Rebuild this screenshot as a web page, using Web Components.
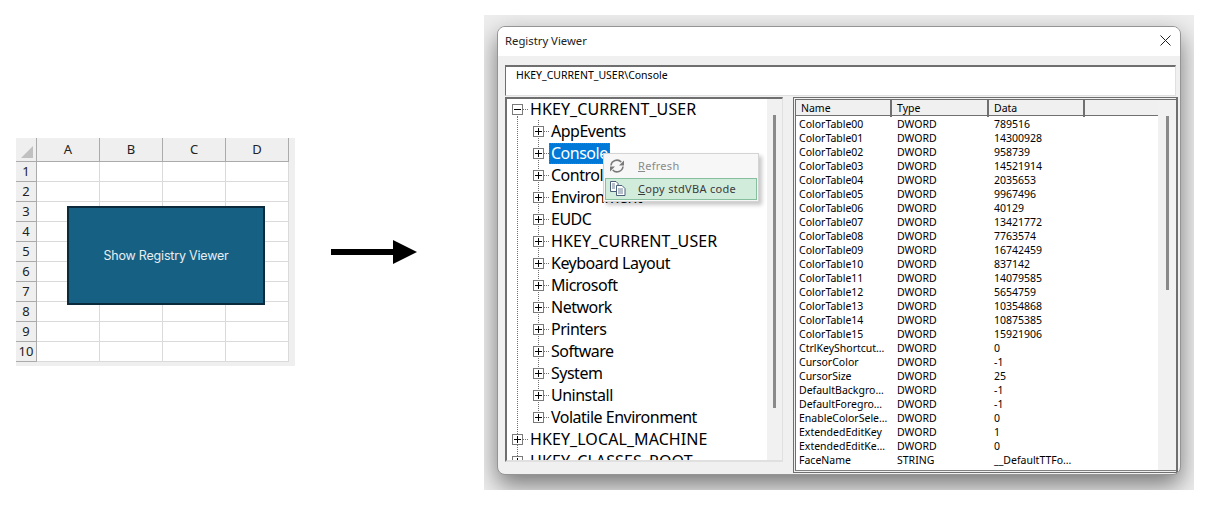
<!DOCTYPE html>
<html><head><meta charset="utf-8"><title>Registry Viewer</title>
<style>html,body{margin:0;padding:0;background:#fff;width:1211px;height:507px;overflow:hidden}</style></head>
<body>
<demo-page></demo-page>
<script>
function el(name,css,html){
  customElements.define(name,class extends HTMLElement{
    connectedCallback(){ if(this.shadowRoot) return;
      const s=this.attachShadow({mode:'open'});
      s.innerHTML='<style>'+css+'</style>'+(typeof html==='function'?html(this):html);
    }
  });
}
const UI='"Noto Sans","Open Sans",sans-serif';

el('sheet-grid',`
:host{display:grid;grid-template-columns:21px repeat(4,63px) 6px;grid-template-rows:24px repeat(10,20px) 4px;width:279px;height:228px;background:#efefef;font:13px ${UI};color:#222;position:relative}
.corner{position:relative;border-right:1px solid #ababab;border-bottom:1px solid #ababab;box-sizing:border-box}
.corner i{position:absolute;right:3px;bottom:3px;width:0;height:0;border-left:12px solid transparent;border-bottom:12px solid #c0c0c0}
.ch{display:flex;align-items:center;justify-content:center;border-right:1px solid #ababab;border-bottom:1px solid #ababab;box-sizing:border-box;padding-bottom:1px}
.rh{display:flex;align-items:center;justify-content:center;border-right:1px solid #ababab;border-bottom:1px solid #ababab;box-sizing:border-box;padding-bottom:2px}
.c{background:#fff;border-right:1px solid #dadada;border-bottom:1px solid #dadada;box-sizing:border-box}
.e{background:#efefef}
.btn{position:absolute;left:51px;top:68px;width:198px;height:99px;box-sizing:border-box;background:#166083;border:2px solid #0b2a3c;color:#e8eef2;display:flex;align-items:center;justify-content:center;font:12.5px "Inter",sans-serif;letter-spacing:-.2px}
`,()=>{
  let h='<div class="corner"><i></i></div>';
  for(const c of 'ABCD')h+=`<div class="ch">${c}</div>`;
  h+='<div class="e"></div>';
  for(let r=1;r<=10;r++){h+=`<div class="rh">${r}</div>`+'<div class="c"></div>'.repeat(4)+'<div class="e"></div>';}
  h+='<div class="e" style="grid-column:1/-1"></div>';
  return h+'<div class="btn">Show Registry Viewer</div>';
});

el('flow-arrow',`
:host{display:block;width:86px;height:24px}
svg{display:block}
`,`<svg width="86" height="24" viewBox="0 0 86 24"><path d="M0 9H62V0L86 12 62 24V15H0Z" fill="#000"/></svg>`);

el('tree-row',`
:host{display:flex;align-items:center;height:22px;position:relative;white-space:nowrap}
.box{width:11px;height:11px;box-sizing:border-box;border:1px solid #7a7a7a;background:#fff;position:relative;flex:none;z-index:1}
.box:before{content:"";position:absolute;left:1px;right:1px;top:4px;height:1px;background:#000}
:host([plus]) .box:after{content:"";position:absolute;top:1px;bottom:1px;left:4px;width:1px;background:#000}
.dots{width:5px;flex:none;border-top:1px dotted #707070;height:0}
.lab{font:16px ${UI};color:#000;padding:0 2px;height:21px;line-height:21px;box-sizing:border-box;letter-spacing:-.5px}
:host([caps]) .lab{letter-spacing:.08px}
:host([sel]) .lab{background:#0078d7;color:#fff;outline:1px dotted #c06000;outline-offset:-1px}
`,`<span class="box"></span><span class="dots"></span><span class="lab"><slot></slot></span>`);

el('reg-tree',`
:host{display:flex;position:relative;overflow:hidden;flex:1;background:#fff;min-width:0}
.body{flex:1;padding:0 0 0 5px;margin-top:-1px;position:relative;overflow:hidden}
.spine{position:absolute;left:10px;top:18px;bottom:0;border-left:1px dotted #707070}
.kids{margin-left:21px;position:relative}
.kids:before{content:"";position:absolute;left:5px;top:0;bottom:11px;border-left:1px dotted #707070}
.track{width:15px;background:#f1f1f1;flex:none;position:relative;display:flex;justify-content:center}
.thumb{width:3px;height:293px;background:#8a8a8a;margin-top:16px}
`,`<div class="body"><div class="spine"></div>
<tree-row caps>HKEY_CURRENT_USER</tree-row>
<div class="kids">
<tree-row plus>AppEvents</tree-row><tree-row plus sel>Console</tree-row><tree-row plus>Control Panel</tree-row><tree-row plus>Environment</tree-row><tree-row plus>EUDC</tree-row><tree-row plus caps>HKEY_CURRENT_USER</tree-row><tree-row plus>Keyboard Layout</tree-row><tree-row plus>Microsoft</tree-row><tree-row plus>Network</tree-row><tree-row plus>Printers</tree-row><tree-row plus>Software</tree-row><tree-row plus>System</tree-row><tree-row plus>Uninstall</tree-row><tree-row plus>Volatile Environment</tree-row>
</div>
<tree-row plus caps>HKEY_LOCAL_MACHINE</tree-row>
<tree-row plus caps>HKEY_CLASSES_ROOT</tree-row>
</div><div class="track"><div class="thumb"></div></div>`);

const rows=[['ColorTable00','DWORD','789516'],['ColorTable01','DWORD','14300928'],['ColorTable02','DWORD','958739'],['ColorTable03','DWORD','14521914'],['ColorTable04','DWORD','2035653'],['ColorTable05','DWORD','9967496'],['ColorTable06','DWORD','40129'],['ColorTable07','DWORD','13421772'],['ColorTable08','DWORD','7763574'],['ColorTable09','DWORD','16742459'],['ColorTable10','DWORD','837142'],['ColorTable11','DWORD','14079585'],['ColorTable12','DWORD','5654759'],['ColorTable13','DWORD','10354868'],['ColorTable14','DWORD','10875385'],['ColorTable15','DWORD','15921906'],['CtrlKeyShortcut…','DWORD','0'],['CursorColor','DWORD','-1'],['CursorSize','DWORD','25'],['DefaultBackgro…','DWORD','-1'],['DefaultForegro…','DWORD','-1'],['EnableColorSele…','DWORD','0'],['ExtendedEditKey','DWORD','1'],['ExtendedEditKe…','DWORD','0'],['FaceName','STRING','__DefaultTTFo…']];

el('reg-list',`
:host{display:flex;flex:1;overflow:hidden;background:#fff;font:10.5px ${UI};color:#000;min-width:0}
.main{flex:1;display:flex;flex-direction:column;min-width:0;overflow:hidden}
.head{display:grid;grid-template-columns:96px 97px 96px 1fr;height:16px;box-sizing:border-box;background:#f0f0f0;border-bottom:1px solid #707070;flex:none}
.head div{border-right:2px solid #707070;padding-left:5px;line-height:17px}
.head div:last-child{border-right:0}
.rows{padding-top:1px}
.r{display:grid;grid-template-columns:98px 97px 1fr;height:14px;line-height:14px;padding-left:3px;white-space:nowrap}
.track{width:18px;flex:none;background:#f1f1f1;display:flex;justify-content:center}
.thumb{width:3px;height:174px;margin-top:16px;background:#8a8a8a}
`,`<div class="main"><div class="head"><div>Name</div><div>Type</div><div>Data</div><div></div></div>
<div class="rows">${rows.map(r=>`<div class="r"><span>${r[0]}</span><span>${r[1]}</span><span>${r[2]}</span></div>`).join('')}</div></div>
<div class="track"><div class="thumb"></div></div>`);

el('ctx-menu',`
:host{display:block;position:absolute;left:603px;top:153px;width:156px;box-sizing:border-box;background:#f7f7f7;border:1px solid #d4d4d4;box-shadow:3px 3px 4px rgba(0,0,0,.22);padding:1px;font:11px ${UI};z-index:5}
.i{display:flex;align-items:center;height:23px;box-sizing:border-box;color:#8a8a8a;letter-spacing:.3px;padding-bottom:2px}
.i.on{height:22px;background:#d2ecdc;border:1px solid #86bf9e;color:#3a3a3a;padding-bottom:1px}
.ic{width:24px;margin-right:9px;display:flex;justify-content:center;flex:none}
.i.on .ic{width:23px}
u{text-underline-offset:1px}
svg{display:block}
`,`<div class="i"><span class="ic"><svg width="16" height="16" viewBox="0 0 16 16" fill="none" stroke="#7a7a7a" stroke-width="1.6"><path d="M2 7.5A6 6 0 0 1 12.3 4"/><path d="M14 8.5A6 6 0 0 1 3.7 12"/><path d="M15 2.5V7.5H10Z" fill="#7a7a7a" stroke="none"/><path d="M1 13.5V8.5H6Z" fill="#7a7a7a" stroke="none"/></svg></span><span><u>R</u>efresh</span></div>
<div class="i on"><span class="ic"><svg width="16" height="15" viewBox="0 0 16 15" fill="#fff" stroke="#4a5f7a"><path d="M.5.5H6l2 2v8H.5Z"/><path d="M6.5 4.5H12l3 3v7H6.5Z"/><path d="M2 3h3M2 5h3M2 7h3M8 8h5M8 10h5M8 12h5" stroke-width=".8"/></svg></span><span><u>C</u>opy stdVBA code</span></div>`);

el('reg-dialog',`
:host{display:flex;flex-direction:column;width:684px;height:449px;box-sizing:border-box;background:#f0f0f0;border-radius:8px;border:1px solid #949494;box-shadow:0 10px 24px rgba(0,0,0,.5);position:relative;overflow:hidden}
.title{height:29px;box-sizing:border-box;background:#fff;flex:none;display:flex;align-items:center;justify-content:space-between;padding:0 9px 2px 7px;font:11.3px ${UI};color:#222}
.x{display:block}
.content{flex:1;display:flex;flex-direction:column;padding:9px 2px 1px 7px;min-height:0;gap:1px}
.addr{height:31px;box-sizing:border-box;flex:none;margin-right:2px;background:#fff;border-top:2px solid #6f6f6f;border-left:1px solid #6f6f6f;border-right:1px solid #e0e0e0;border-bottom:1px solid #e0e0e0;padding:1px 0 0 10px;font:10.5px ${UI};line-height:15px;color:#000}
.panes{flex:1;display:flex;gap:10px;min-height:0;align-items:flex-start}
.pane{display:flex;box-sizing:border-box;min-width:0;overflow:hidden}
.l{width:278px;height:365px;border:2px solid;border-color:#6f6f6f #e0e0e0 #e0e0e0 #6f6f6f;border-right-width:1px}
.r{width:385px;height:376px;border:1px solid #6f6f6f;border-right-width:2px;padding:1px 0 1px 1px;background:#f0f0f0}
.in{flex:1;display:flex;min-width:0;overflow:hidden;border-left:1px solid #6f6f6f;border-top:1px solid #6f6f6f;border-bottom:1px solid #808080}
`,`<div class="title"><span>Registry Viewer</span><svg class="x" width="11" height="11" viewBox="0 0 11 11" stroke="#222" stroke-width="1"><path d="M.5.5l10 10M10.5.5l-10 10"/></svg></div>
<div class="content"><div class="addr">HKEY_CURRENT_USER\\Console</div>
<div class="panes"><div class="pane l"><reg-tree></reg-tree></div><div class="pane r"><div class="in"><reg-list></reg-list></div></div></div></div>`);

el('dialog-shot',`
:host{display:flex;width:710px;height:475px;padding:11px 13px 15px;box-sizing:border-box;background:#eeeeee;overflow:hidden}
`,`<reg-dialog></reg-dialog>`);

el('demo-page',`
:host{display:block;position:relative;width:1211px;height:507px;overflow:hidden}
.row{display:flex;align-items:flex-start;padding:15px 0 0 16px}
.a{margin:225px 0 0 36px;flex:none}
.b{margin:123px 0 0 0;flex:none}
.shot{margin-left:67px;flex:none}
`,`<div class="row"><div class="b"><sheet-grid></sheet-grid></div><div class="a"><flow-arrow></flow-arrow></div><div class="shot"><dialog-shot></dialog-shot></div></div><ctx-menu></ctx-menu>`);
</script>
</body></html>
